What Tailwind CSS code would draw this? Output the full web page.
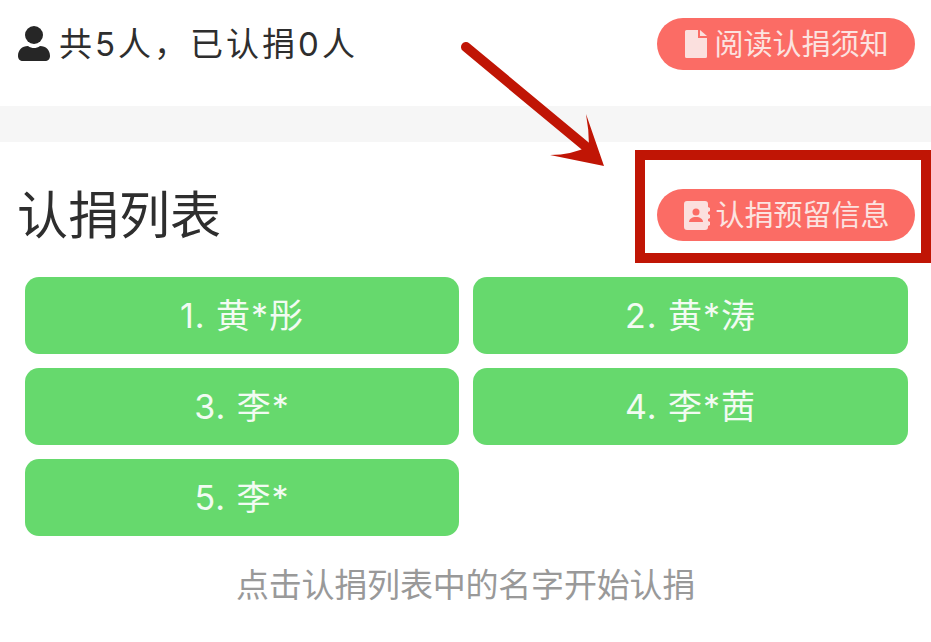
<!DOCTYPE html>
<html lang="zh">
<head>
<meta charset="utf-8">
<script src="https://cdn.jsdelivr.net/npm/@tailwindcss/browser@4"></script>
</head>
<body class="bg-white font-['Inter','Noto_Sans_CJK_SC',sans-serif] text-[#2e2e2e]">
<div class="relative w-[931px] h-[642px] overflow-hidden">
  <header class="h-[106px] flex items-start justify-between pl-[18px] pr-[16px] pt-[18px]">
    <div class="flex items-center gap-[9px] h-[52px] text-[33px] leading-none tracking-[3px] text-[#2e2e2e]">
      <svg class="w-[32px] h-[36px]" viewBox="0 0 32 36" fill="#262626"><circle cx="16" cy="9" r="9"/><path d="M0 30c0-6 4-10 10-10 2 1.500 4 2 6 2s4-.5 6-2c6 0 10 4 10 10 0 3-2 5-5 5H5c-3 0-5-2-5-5z"/></svg>
      <span>共5人，已认捐0人</span>
    </div>
    <button class="w-[258px] h-[52px] rounded-full bg-[#fb6c65] text-[#fbe3e0] text-[29px] leading-none flex items-center justify-center gap-[7px] pl-[2px]">
      <svg class="w-[22px] h-[28px]" viewBox="0 0 22 28" fill="#fbe0de"><path d="M1.500 0H13v8h9v18.500a1.500 1.500 0 0 1-1.500 1.500h-19A1.500 1.500 0 0 1 0 26.500v-25A1.500 1.500 0 0 1 1.500 0z"/><path d="M15 0l7 6h-7z"/></svg>
      <span>阅读认捐须知</span>
    </button>
  </header>
  <div class="h-[36px] bg-[#f6f6f6]"></div>
  <section class="pt-[47px]">
    <div class="flex items-center justify-between pl-[17px] pr-[16px] h-[52px]">
      <h2 class="text-[51px] leading-none text-[#2e2e2e]">认捐列表</h2>
      <button class="w-[258px] h-[52px] rounded-full bg-[#fb6c65] text-[#fbe3e0] text-[29px] leading-none flex items-center justify-center gap-[5px] pl-[2px]">
        <svg class="w-[26px] h-[29px]" viewBox="0 0 26 29"><path fill="#fbe0de" d="M3 0h18a3 3 0 0 1 3 3v3l2 1v3l-2 1v2l2 1v3l-2 1v2l2 1v3l-2 1v1a3 3 0 0 1-3 3H3a3 3 0 0 1-3-3V3a3 3 0 0 1 3-3z"/><circle cx="12" cy="11" r="3.500" fill="#fb6c65"/><path fill="#fb6c65" d="M5 21c0-3 3-5 7-5s7 2 7 5z"/></svg>
        <span>认捐预留信息</span>
      </button>
    </div>
    <div class="grid grid-cols-[434px_435px] gap-[14px] pl-[25px] mt-[36px]">
      <div class="h-[77px] rounded-[14px] bg-[#66d96d] text-[#f2fbf2] text-[34px] tracking-[1px] flex items-center justify-center">1. 黄*彤</div>
      <div class="h-[77px] rounded-[14px] bg-[#66d96d] text-[#f2fbf2] text-[34px] tracking-[1px] flex items-center justify-center">2. 黄*涛</div>
      <div class="h-[77px] rounded-[14px] bg-[#66d96d] text-[#f2fbf2] text-[34px] tracking-[1px] flex items-center justify-center">3. 李*</div>
      <div class="h-[77px] rounded-[14px] bg-[#66d96d] text-[#f2fbf2] text-[34px] tracking-[1px] flex items-center justify-center">4. 李*茜</div>
      <div class="h-[77px] rounded-[14px] bg-[#66d96d] text-[#f2fbf2] text-[34px] tracking-[1px] flex items-center justify-center">5. 李*</div>
    </div>
    <p class="mt-[29px] text-center text-[33px] leading-[40px] tracking-[-0.2px] text-[#999]">点击认捐列表中的名字开始认捐</p>
  </section>
  <div class="absolute left-[635px] top-[150px] w-[296px] h-[113px] border-[10px] border-[#c01505]"></div>
  <svg class="absolute left-0 top-0 w-[931px] h-[642px] pointer-events-none" viewBox="0 0 931 642">
    <path d="M466 47L590 150" stroke="#c01505" stroke-width="10" stroke-linecap="round" fill="none"/>
    <path d="M586 114L604 166L550 155Q572 155 589 146Q589 130 586 114z" fill="#c01505"/>
  </svg>
</div>
</body>
</html>
